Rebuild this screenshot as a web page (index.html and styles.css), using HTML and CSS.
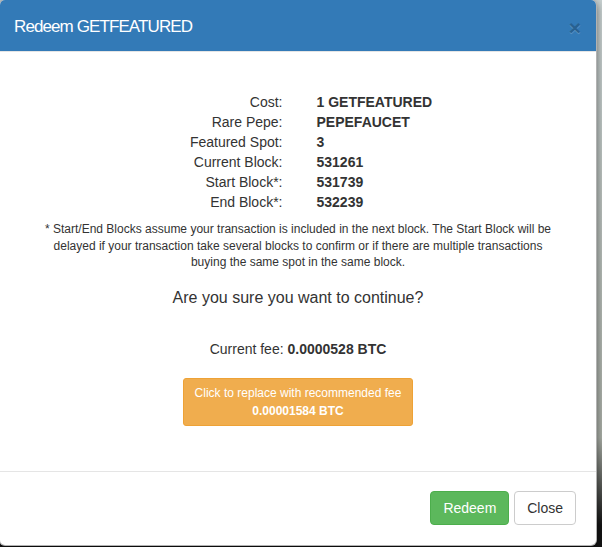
FILE: index.html
```html
<!DOCTYPE html>
<html lang="en">
<head>
    <meta charset="UTF-8">
    <title>Redeem GETFEATURED</title>
    <link rel="stylesheet" href="styles.css">
</head>
<body>
    <div class="modal">
        <div class="modal-header">
            <h4 class="modal-title">Redeem GETFEATURED</h4>
            <button class="close">&times;</button>
        </div>

        <div class="modal-body">
            <dl class="details">
                <dt>Cost:</dt><dd>1 GETFEATURED</dd>
                <dt>Rare Pepe:</dt><dd>PEPEFAUCET</dd>
                <dt>Featured Spot:</dt><dd>3</dd>
                <dt>Current Block:</dt><dd>531261</dd>
                <dt>Start Block*:</dt><dd>531739</dd>
                <dt>End Block*:</dt><dd>532239</dd>
            </dl>
            <p class="note">* Start/End Blocks assume your transaction is included in the next block. The Start Block will be delayed if your transaction take several blocks to confirm or if there are multiple transactions buying the same spot in the same block.</p>
            <p class="confirm">Are you sure you want to continue?</p>
            <p class="fee">Current fee: <b>0.0000528 BTC</b></p>
            <button class="btn btn-sm btn-warning">Click to replace with recommended fee<br><b>0.00001584 BTC</b></button>
        </div>

        <div class="modal-footer">
            <button class="btn btn-success">Redeem</button>
            <button class="btn btn-default">Close</button>
        </div>
    </div>
</body>
</html>
```

FILE: styles.css
```css
html, body {
    height: 100%;
}
body {
    margin: 0;
    background: linear-gradient(#c8d1d1 0%, #a9aea6 80%, #141414 96%);
    font-family: "Liberation Sans", Arial, sans-serif;
    font-size: 14px;
    line-height: 20px;
    color: #333;
    overflow: hidden;
}

.modal {
    width: 596px;
    margin: -1px 0 0 -1px;
    background: #fff;
    border: 1px solid rgba(0, 0, 0, 0.3);
    border-radius: 6px;
    box-shadow: 0 3px 9px rgba(0, 0, 0, 0.5);
    overflow: hidden;
}

.modal-header {
    display: flex;
    align-items: center;
    justify-content: space-between;
    height: 52px;
    box-sizing: border-box;
    padding: 3px 15px 0 14px;
    background: #337ab7;
    border-bottom: 1px solid #e5e5e5;
}
.modal-title {
    margin: 0;
    font-size: 17px;
    line-height: 20px;
    font-weight: normal;
    color: #fff;
    letter-spacing: -0.9px;
}
.close {
    padding: 0;
    border: none;
    background: none;
    font-family: "Liberation Sans", Arial, sans-serif;
    font-size: 21px;
    font-weight: bold;
    line-height: 1;
    color: #000;
    opacity: 0.2;
    text-shadow: 0 1px 0 #fff;
    cursor: pointer;
}

.modal-body {
    padding: 40px 20px 45px;
    text-align: center;
}

.details {
    display: grid;
    grid-template-columns: 1fr 1fr;
    column-gap: 34px;
    margin: 0;
    padding-left: 3px;
}
.details dt {
    text-align: right;
    font-weight: normal;
}
.details dd {
    margin: 0;
    text-align: left;
    font-weight: bold;
}

.note {
    max-width: 520px;
    margin: 9px auto 0;
    font-size: 12px;
    line-height: 16.5px;
}
.confirm {
    margin: 15px 0 0;
    font-size: 16px;
    line-height: 23px;
}
.fee {
    margin: 30px 0 0;
}

.btn {
    display: inline-block;
    padding: 6px 12px;
    font-family: "Liberation Sans", Arial, sans-serif;
    font-size: 14px;
    line-height: 20px;
    border: 1px solid transparent;
    border-radius: 4px;
    cursor: pointer;
}
.btn + .btn {
    margin-left: 1px;
}
.btn-sm {
    padding: 5px 11px;
    font-size: 12px;
    line-height: 18px;
    border-radius: 3px;
}
.btn-warning {
    margin-top: 19px;
    color: #fff;
    background: #f0ad4e;
    border-color: #eea236;
}
.btn-success {
    color: #fff;
    background: #5cb85c;
    border-color: #4cae4c;
}
.btn-default {
    color: #333;
    background: #fff;
    border-color: #ccc;
}

.modal-footer {
    padding: 19px 20px 20px;
    text-align: right;
    border-top: 1px solid #e5e5e5;
}
```
